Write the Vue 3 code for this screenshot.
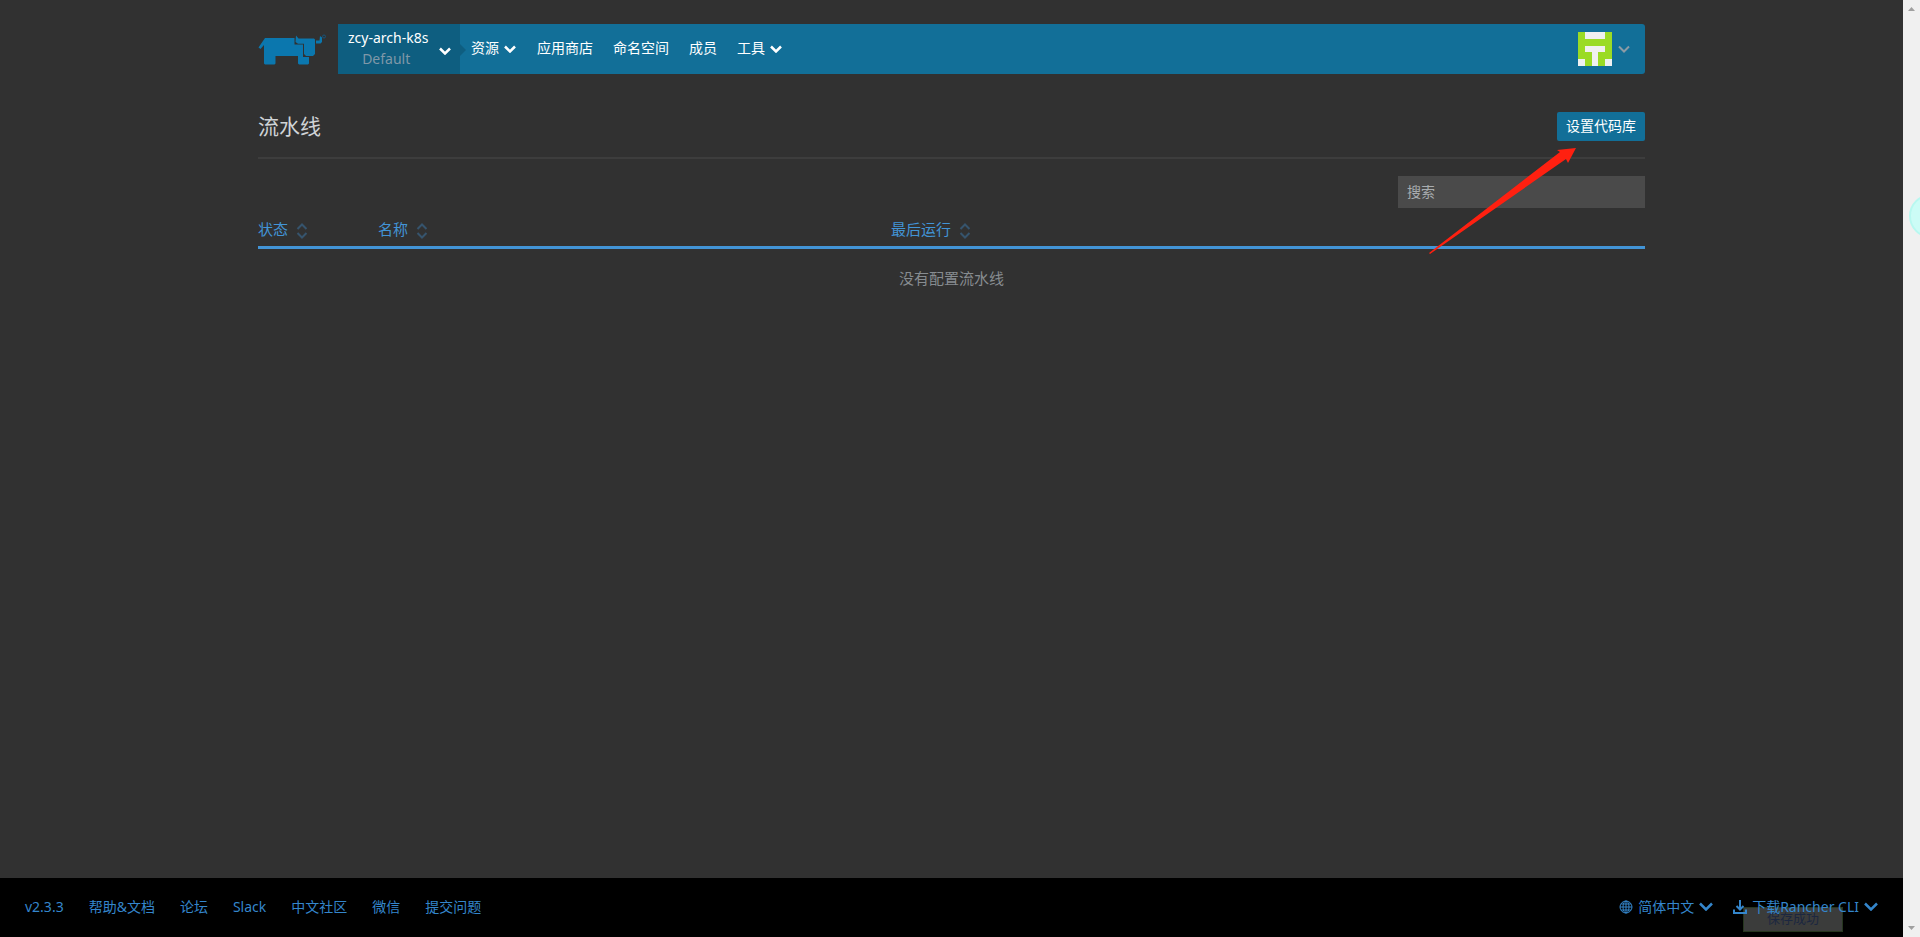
<script setup>
import { ref } from 'vue'

const search = ref('')
const navItems = [
  { label: '资源', menu: true },
  { label: '应用商店', menu: false },
  { label: '命名空间', menu: false },
  { label: '成员', menu: false },
  { label: '工具', menu: true },
]
const columns = [
  { label: '状态', cls: 'col-state' },
  { label: '名称', cls: 'col-name' },
  { label: '最后运行', cls: 'col-run' },
]
const footerLinks = ['v2.3.3', '帮助&文档', '论坛', 'Slack', '中文社区', '微信', '提交问题']
</script>

<template>
  <div class="screen">
    <div class="page">
      <header class="header">
        <a class="logo" href="#" aria-label="Rancher">
          <svg width="70" height="32" viewBox="0 0 70 32">
            <path fill="#0b77ae" d="M7 4H36.500V10.500H45V23H51V29.500L50 30.500H41L40 29.500V22H17.500V29.500L16.500 30.500H7L6 29.500V11L2.500 15L0.500 13.500Z" />
            <path fill="#0b77ae" d="M38 1.500L40.500 4.500H56L57 5.500V20L55 22H48L46 20V9.800H40L37.500 8Z" />
            <path fill="#0b77ae" d="M58 6.500H61.500L62 2L64 3.500V8L62.500 9.500H58Z" />
            <circle cx="66" cy="2.500" r="1.500" fill="none" stroke="#17547a" />
          </svg>
        </a>
        <div class="bar">
          <button class="project" type="button">
            <span class="project-names">
              <span>zcy-arch-k8s</span>
              <span class="project-sub">Default</span>
            </span>
            <svg class="chev low" width="12" height="8" viewBox="0 0 12 8"><path d="M1 1.500L6 6.500L11 1.500" /></svg>
          </button>
          <nav class="nav">
            <a v-for="item in navItems" :key="item.label" href="#">
              <span>{{ item.label }}</span>
              <svg v-if="item.menu" class="chev" width="12" height="8" viewBox="0 0 12 8"><path d="M1 1.500L6 6.500L11 1.500" /></svg>
            </a>
          </nav>
          <button class="user" type="button" aria-label="用户">
            <svg width="34" height="34" viewBox="0 0 34 34">
              <path fill="#9bdb25" d="M0 0H34V34H0Z" />
              <path fill="#f0f0f0" d="M7 0H27V7H7ZM7 14H27V20H20V34H14V20H7ZM0 27H7V34H0ZM27 27H34V34H27Z" />
            </svg>
            <svg class="chev" width="12" height="8" viewBox="0 0 12 8"><path d="M1 1.500L6 6.500L11 1.500" /></svg>
          </button>
        </div>
      </header>

      <main class="main">
        <div class="title-row">
          <h1>流水线</h1>
          <button class="primary" type="button">设置代码库</button>
          <svg class="arrow" width="148" height="108" viewBox="0 0 148 108">
            <path fill="#ff2010" d="M0 105L131 4L128 2L147 0L139 15L137 11L1 106Z" />
          </svg>
        </div>
        <div class="search-row">
          <input v-model="search" type="text" placeholder="搜索" aria-label="搜索" />
        </div>
        <table class="grid">
          <thead>
            <tr>
              <th v-for="col in columns" :key="col.label" :class="col.cls" scope="col">
                <button type="button">
                  {{ col.label }}
                  <svg width="12" height="16" viewBox="0 0 12 16"><path d="M1.500 6L6 1.500L10.500 6M1.500 10L6 14.500L10.500 10" /></svg>
                </button>
              </th>
            </tr>
          </thead>
          <tbody>
            <tr>
              <td colspan="3">没有配置流水线</td>
            </tr>
          </tbody>
        </table>
      </main>

      <footer class="footer">
        <div class="links">
          <a v-for="link in footerLinks" :key="link" href="#">{{ link }}</a>
        </div>
        <div class="tools">
          <button type="button">
            <svg class="line" width="14" height="14" viewBox="0 0 14 14">
              <circle cx="7" cy="7" r="6" />
              <ellipse cx="7" cy="7" rx="3" ry="6" />
              <path d="M7 1V13M1 7H13M2 4H12M2 10H12" />
            </svg>
            <span>简体中文</span>
            <svg class="chev" width="14" height="9" viewBox="0 0 14 9"><path d="M1 1.500L7 7.500L13 1.500" /></svg>
          </button>
          <button type="button">
            <svg class="load" width="14" height="14" viewBox="0 0 14 14"><path d="M7 0V9M3.500 6L7 9.500L10.500 6M1 9.500V13H13V9.500" /></svg>
            <span>下载Rancher CLI</span>
            <svg class="chev" width="14" height="9" viewBox="0 0 14 9"><path d="M1 1.500L7 7.500L13 1.500" /></svg>
          </button>
        </div>
        <div class="toast" role="status">保存成功</div>
      </footer>
    </div>

    <div class="scrollbar" aria-hidden="true">
      <svg width="7" height="4" viewBox="0 0 7 4"><path d="M0 4L3.500 0L7 4Z" /></svg>
      <div class="bubble"></div>
      <svg width="7" height="4" viewBox="0 0 7 4"><path d="M0 0L3.500 4L7 0Z" /></svg>
    </div>
  </div>
</template>

<style>
body {
  margin: 0;
  background: #313131;
}
</style>

<style scoped>
.screen {
  display: flex;
  min-height: 100vh;
  background: #313131;
  color: #fff;
  font-family: 'Noto Sans', 'Noto Sans CJK SC', sans-serif;
  font-size: 14px;
  line-height: 20px;
}
button {
  padding: 0;
  border: 0;
  background: none;
  color: inherit;
  font: inherit;
  cursor: pointer;
}
a {
  color: inherit;
  text-decoration: none;
}
svg {
  display: block;
  flex: none;
}
.page {
  flex: 1;
  min-width: 0;
  display: flex;
  flex-direction: column;
}
.chev {
  fill: none;
  stroke: currentColor;
  stroke-width: 2.5;
}
.header {
  display: flex;
  margin: 24px 258px 0;
}
.logo {
  width: 80px;
  padding-top: 10px;
  box-sizing: border-box;
}
.bar {
  flex: 1;
  display: flex;
  height: 50px;
  background: #126f98;
  border-radius: 0 3px 3px 0;
}
.project {
  position: relative;
  display: flex;
  align-items: center;
  justify-content: space-between;
  width: 122px;
  padding: 0 9px 0 10px;
  background: #0e5e80;
}
.project::after {
  content: '';
  position: absolute;
  left: 100%;
  top: 20px;
  border: 6px solid transparent;
  border-right: 0;
  border-left-color: #0e5e80;
}
.project-names {
  display: flex;
  flex-direction: column;
  align-items: center;
  padding-bottom: 2px;
  line-height: 21px;
}
.project-sub {
  padding-right: 4px;
  color: #7f98a8;
}
.low {
  margin-top: 4px;
}
.nav {
  flex: 1;
  display: flex;
  align-items: center;
  gap: 20px;
  padding: 0 11px 2px;
}
.nav a {
  display: flex;
  align-items: center;
  gap: 5px;
}
.nav .chev {
  margin: 2px 1px 0 0;
}
.user {
  display: flex;
  align-items: center;
  gap: 6px;
  padding-right: 15px;
  color: #8c9ba5;
}
.user .chev {
  stroke-width: 2;
}
.main {
  flex: 1;
  margin: 0 258px;
}
.title-row {
  position: relative;
  display: flex;
  align-items: center;
  justify-content: space-between;
  padding: 38px 0 16px;
  border-bottom: 2px solid #3d3d3d;
}
h1 {
  margin: 0;
  color: #cfd3d6;
  font-size: 21px;
  font-weight: 400;
  line-height: 27px;
}
.primary {
  height: 29px;
  padding: 0 9px 2px;
  background: #126f98;
  border-radius: 2px;
}
.arrow {
  position: absolute;
  right: 68px;
  top: 74px;
  pointer-events: none;
}
.search-row {
  display: flex;
  justify-content: flex-end;
  padding: 17px 0 10px;
}
input {
  width: 247px;
  height: 32px;
  padding: 0 9px 2px;
  box-sizing: border-box;
  border: 0;
  border-radius: 0;
  outline: 0;
  background: #4a4a4a;
  color: #fff;
  font: inherit;
}
input::placeholder {
  color: #a8acaf;
  opacity: 1;
}
.grid {
  width: 100%;
  border-collapse: collapse;
  table-layout: fixed;
}
th {
  padding: 0 0 6px;
  border-bottom: 3px solid #4294d6;
  color: #4294d6;
  font-size: 15px;
  font-weight: 400;
  line-height: 22px;
  text-align: left;
}
th button {
  display: flex;
  align-items: center;
  gap: 8px;
}
th svg {
  margin-top: 4px;
  fill: none;
  stroke: #36546d;
  stroke-width: 2;
}
.col-state {
  width: 120px;
}
.col-name {
  width: 513px;
}
td {
  padding: 18px 0;
  color: #878c90;
  font-size: 15px;
  line-height: 22px;
  text-align: center;
}
.footer {
  position: relative;
  display: flex;
  align-items: center;
  justify-content: space-between;
  height: 59px;
  padding: 0 25px 2px;
  box-sizing: border-box;
  background: #000;
  color: #3486cc;
}
.links,
.tools,
.tools button {
  display: flex;
  align-items: center;
}
.links {
  gap: 25px;
}
.tools {
  position: relative;
  z-index: 1;
  gap: 20px;
}
.tools button {
  gap: 5px;
}
.line {
  fill: none;
  stroke: currentColor;
}
.load {
  fill: none;
  stroke: currentColor;
  stroke-width: 2;
}
.toast {
  position: absolute;
  right: 60px;
  bottom: 5px;
  width: 100px;
  height: 25px;
  box-sizing: border-box;
  border: 1px solid #26361f;
  background: #3b3c3b;
  color: #1c2740;
  font-size: 13px;
  line-height: 20px;
  text-align: center;
}
.scrollbar {
  width: 17px;
  display: flex;
  flex-direction: column;
  align-items: center;
  justify-content: space-between;
  position: relative;
  overflow: hidden;
  padding: 7px 0;
  box-sizing: border-box;
  background: #f0f0f0;
}
.scrollbar svg {
  fill: #a0a0a0;
}
.bubble {
  position: absolute;
  left: 6px;
  top: 194px;
  width: 44px;
  height: 44px;
  box-sizing: border-box;
  border: 2px solid #b8f8f0;
  border-radius: 50%;
  background: #ccfcf6;
}
</style>
